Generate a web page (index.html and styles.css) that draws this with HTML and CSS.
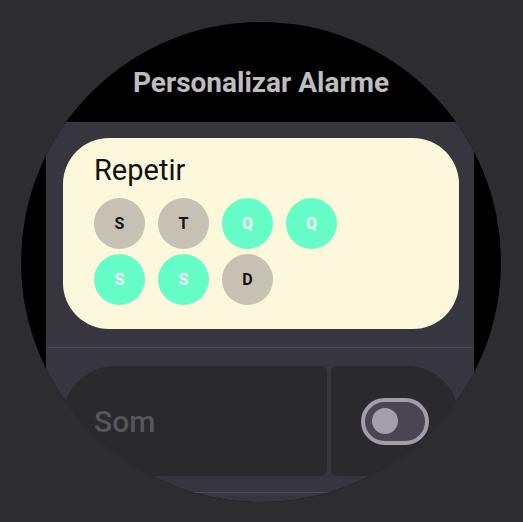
FILE: index.html
```html
<!DOCTYPE html>
<html lang="pt">
<head>
<meta charset="utf-8">
<title>Personalizar Alarme</title>
<link rel="stylesheet" href="styles.css">
</head>
<body>
<div class="screen">
  <h1 class="title">Personalizar Alarme</h1>
  <div class="panel">
    <section class="sec sec-repeat">
      <div class="repeat-card">
        <div class="repeat-label">Repetir</div>
        <div class="days">
          <span class="day off">S</span>
          <span class="day off">T</span>
          <span class="day on">Q</span>
          <span class="day on">Q</span>
          <span class="day on">S</span>
          <span class="day on">S</span>
          <span class="day off">D</span>
        </div>
      </div>
    </section>
    <section class="sec sec-sound">
      <div class="split">
        <div class="split-main">Som</div>
        <div class="split-toggle">
          <span class="switch"><span class="knob"></span></span>
        </div>
      </div>
    </section>
    <section class="sec sec-more"></section>
  </div>
</div>
</body>
</html>
```

FILE: styles.css
```css
* { box-sizing: border-box; }

html, body {
  margin: 0;
  padding: 0;
  background: #2c2c31;
  width: 523px;
  height: 522px;
  overflow: hidden;
}

body {
  padding: 22px 0 0 21px;
  font-family: Roboto, "Noto Sans", "Liberation Sans", sans-serif;
}

.screen {
  width: 480px;
  height: 480px;
  border-radius: 50%;
  background: #000;
  overflow: hidden;
  display: flex;
  flex-direction: column;
}

.title {
  margin: 0;
  padding-top: 46px;
  height: 100px;
  text-align: center;
  font-size: 28px;
  line-height: 30px;
  font-weight: 700;
  color: #bdbdbf;
}

.panel {
  margin-left: 25px;
  width: 428px;
  flex: 1;
  background: #37363e;
  display: flex;
  flex-direction: column;
}

.sec {
  border-bottom: 1px solid #4c4b53;
}

.sec-repeat {
  padding: 16px 15px 18px 17px;
}

.repeat-card {
  height: 191px;
  background: #fdf7dc;
  border-radius: 46px;
  padding: 16px 0 0 31px;
}

.repeat-label {
  font-size: 29px;
  line-height: 32px;
  color: #111;
}

.days {
  margin-top: 12px;
  display: grid;
  grid-template-columns: repeat(4, 51px);
  column-gap: 13px;
  row-gap: 5px;
}

.day {
  width: 51px;
  height: 51px;
  border-radius: 50%;
  display: flex;
  align-items: center;
  justify-content: center;
  font-size: 16px;
  font-weight: 700;
}

.day.off { background: #c6c1b2; color: #111; }
.day.on { background: #66fdc8; color: #fff; }

.sec-sound {
  padding: 18px 15px 16px 17px;
}

.split {
  display: flex;
  gap: 4px;
  height: 110px;
}

.split-main {
  flex: 0 0 264px;
  background: #2a292e;
  border-radius: 52px 6px 6px 52px;
  display: flex;
  align-items: center;
  padding-left: 31px;
  font-size: 30px;
  font-weight: 500;
  color: #56555b;
}

.split-toggle {
  flex: 1;
  background: #2a292e;
  border-radius: 6px 52px 52px 6px;
  display: flex;
  align-items: center;
  justify-content: center;
}

.switch {
  width: 68px;
  height: 47px;
  border: 4px solid #a29da8;
  border-radius: 24px;
  background: #4a4553;
  display: flex;
  align-items: center;
  padding-left: 7px;
}

.knob {
  width: 26px;
  height: 26px;
  border-radius: 50%;
  background: #a59fad;
}

.sec-more {
  flex: 1;
  border-bottom: none;
}
```
